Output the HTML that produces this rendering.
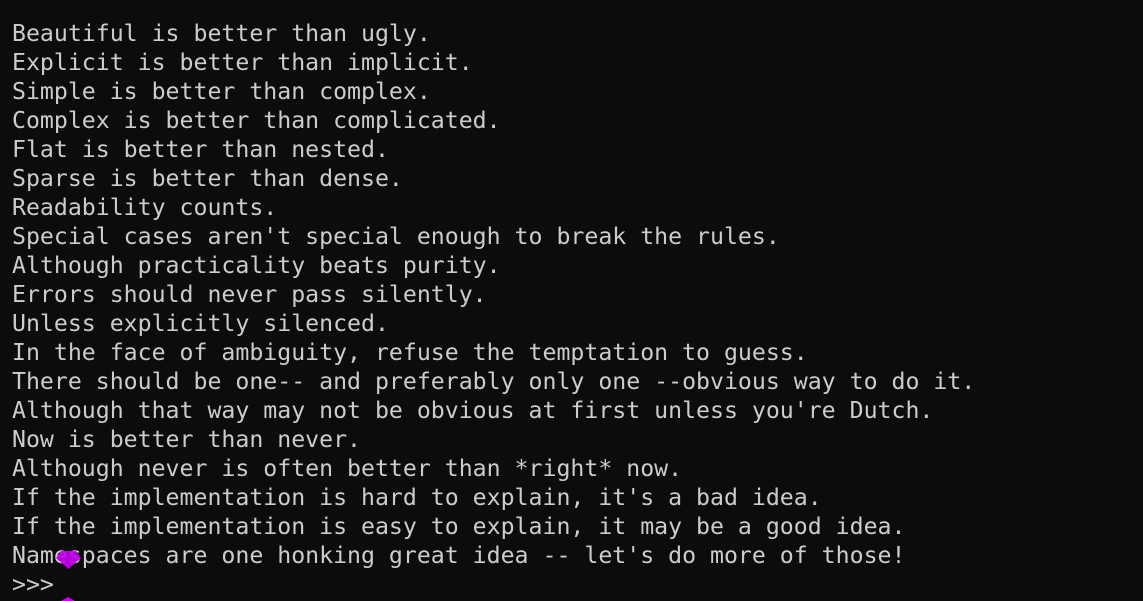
<!DOCTYPE html>
<html><head><style>
html,body{margin:0;padding:0;background:#0c0c0c;width:1143px;height:601px;overflow:hidden}
pre{margin:0;padding:19px 0 0 12px;font-family:"DejaVu Sans Mono","Liberation Mono",monospace;font-size:23.2px;line-height:29px;color:#cccccc}
.g{position:absolute}
</style></head><body>
<pre>Beautiful is better than ugly.
Explicit is better than implicit.
Simple is better than complex.
Complex is better than complicated.
Flat is better than nested.
Sparse is better than dense.
Readability counts.
Special cases aren't special enough to break the rules.
Although practicality beats purity.
Errors should never pass silently.
Unless explicitly silenced.
In the face of ambiguity, refuse the temptation to guess.
There should be one-- and preferably only one --obvious way to do it.
Although that way may not be obvious at first unless you're Dutch.
Now is better than never.
Although never is often better than *right* now.
If the implementation is hard to explain, it's a bad idea.
If the implementation is easy to explain, it may be a good idea.
Namespaces are one honking great idea -- let's do more of those!
&gt;&gt;&gt;</pre>
<svg class="g" style="left:55px;top:550px" width="27" height="20"><path d="M6 1 H21 L26 8 L13.5 19 L1 8 Z" fill="#c800f0" opacity="0.9"/></svg>
<svg class="g" style="left:61px;top:597px" width="14" height="4"><path d="M0 4 L7 0 L14 4 Z" fill="#c800f0"/></svg>
</body></html>
